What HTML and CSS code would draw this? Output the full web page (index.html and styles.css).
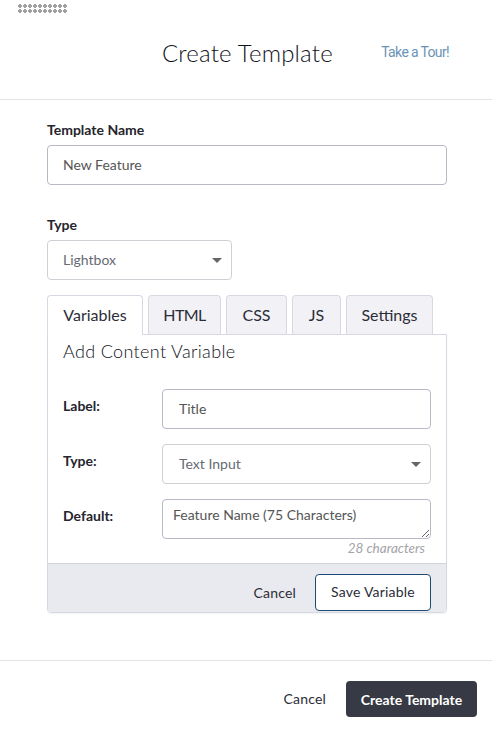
FILE: index.html
```html
<!DOCTYPE html>
<html lang="en">
<head>
<meta charset="utf-8">
<title>Create Template</title>
<link rel="stylesheet" href="styles.css">
</head>
<body>
<div class="grip"></div>
<header class="head">
  <h1 class="title">Create Template</h1>
  <a class="tour" href="#">Take a Tour!</a>
</header>
<main class="body">
  <label class="field-label" for="name">Template Name</label>
  <input class="control wide" id="name" value="New Feature">
  <label class="field-label type-label">Type</label>
  <div class="select narrow"><span>Lightbox</span><i class="caret"></i></div>
  <nav class="tabs">
    <a class="tab active">Variables</a>
    <a class="tab">HTML</a>
    <a class="tab">CSS</a>
    <a class="tab">JS</a>
    <a class="tab">Settings</a>
  </nav>
  <section class="panel">
    <div class="panel-body">
      <h2 class="panel-title">Add Content Variable</h2>
      <div class="row">
        <label class="row-label">Label:</label>
        <input class="control row-control indent" value="Title">
      </div>
      <div class="row">
        <label class="row-label">Type:</label>
        <div class="select row-control indent"><span>Text Input</span><i class="caret"></i></div>
      </div>
      <div class="row last">
        <label class="row-label">Default:</label>
        <textarea class="control row-control area">Feature Name (75 Characters)</textarea>
      </div>
      <div class="count">28 characters</div>
    </div>
    <div class="panel-foot">
      <a class="cancel">Cancel</a>
      <button class="save">Save Variable</button>
    </div>
  </section>
</main>
<footer class="foot">
  <a class="cancel">Cancel</a>
  <button class="create">Create Template</button>
</footer>
</body>
</html>
```
FILE: styles.css
```css
* { box-sizing: border-box; }
html, body { margin: 0; padding: 0; background: #fff; }
body { width: 492px; height: 733px; overflow: hidden; font-family: "Lato", "Liberation Sans", sans-serif; color: #2b2d38; position: relative; }
.grip { position: absolute; left: 18px; top: 4px; width: 49px; height: 10px; background-image: radial-gradient(circle at 2px 2px, #a0a0a0 1.6px, transparent 2px); background-size: 5px 5px; }
.head { height: 100px; border-bottom: 1px solid #e4e4e6; display: flex; align-items: center; position: relative; padding: 6px 43px 0 162px; justify-content: space-between; }
.title { margin: 0; font-size: 24px; font-weight: 300; color: #11131b; letter-spacing: 0.2px; }
.tour { font-family: "Roboto", sans-serif; font-size: 14px; color: #6a93b5; text-decoration: none; letter-spacing: -0.65px; margin-top: -1px; }
.body { padding: 21px 45px 0 47px; height: 560px; }
.field-label { display: block; font-size: 14px; font-weight: 700; line-height: 17px; color: #25252d; margin-bottom: 7px; }
.type-label { margin-top: 31px; margin-bottom: 7px; }
.control { display: block; background: #fff; border: 1px solid #b9b9c6; border-radius: 4px; font: 14px "Lato", sans-serif; color: #555; height: 40px; padding: 0 15px 2px; outline: none; }
.wide { width: 400px; }
.select { height: 40px; border: 1px solid #cfcfd6; border-radius: 4px; display: flex; align-items: center; justify-content: space-between; padding: 0 9px 2px 15px; font-size: 14px; color: #666a73; background: #fff; }
.narrow { width: 185px; }
.control.indent, .select.indent { padding-left: 16px; }
.caret { width: 0; height: 0; border-left: 5px solid transparent; border-right: 5px solid transparent; border-top: 5px solid #666; margin-top: 3px; }
.tabs { display: flex; gap: 5px; margin-top: 15px; height: 40px; position: relative; }
.tab { display: flex; align-items: center; justify-content: center; height: 39px; padding: 0 15px 2px; font-size: 16px; color: #2b2d38; background: #f2f2f6; border: 1px solid #d8d8e2; border-bottom: 0; border-radius: 4px 4px 0 0; }
.tab:nth-child(1) { width: 96px; }
.tab:nth-child(2) { width: 73px; letter-spacing: -0.6px; }
.tab:nth-child(3) { width: 61px; }
.tab:nth-child(4) { width: 49px; }
.tab:nth-child(5) { width: 87px; }
.tab.active { background: #fff; height: 40px; position: relative; z-index: 1; }
.panel { width: 400px; margin-top: -1px; border: 1px solid #d8d8e2; border-radius: 0 0 4px 4px; height: 279px; display: flex; flex-direction: column; box-shadow: 0 1px 2px rgba(0,0,0,0.05); }
.panel-body { flex: 1; padding: 6px 15px 0 15px; }
.panel-title { margin: 0 0 27px; font-size: 18px; font-weight: 300; line-height: 21px; color: #11131b; letter-spacing: 0.35px; }
.row { display: flex; margin-bottom: 15px; }
.row.last { margin-bottom: 0; }
.row-label { width: 99px; font-size: 14px; font-weight: 700; color: #25252d; line-height: 17px; padding-top: 8px; }
.row-control { width: 269px; flex: none; }
.control.area { padding: 5px 10px; line-height: 20px; resize: vertical; overflow: hidden; }
.count { text-align: right; font-size: 13.5px; font-style: italic; color: #a3a3a8; padding-right: 6px; line-height: 18px; }
.panel-foot { flex: none; height: 49px; background: #e9eaef; border-top: 1px solid #d2d2d8; display: flex; align-items: center; justify-content: flex-end; gap: 19px; padding: 10px 15px 1px 0; border-radius: 0 0 4px 4px; }
.cancel { font-size: 14px; color: #2b2d38; letter-spacing: 0.2px; }
.save { width: 116px; height: 37px; background: #fff; border: 1px solid #1f4a75; border-radius: 4px; font: 14px "Lato", sans-serif; color: #2b2d38; letter-spacing: 0.2px; padding: 0 0 2px; }
.foot { position: absolute; left: 0; right: 0; top: 660px; height: 73px; border-top: 1px solid #e4e4e6; display: flex; align-items: center; justify-content: flex-end; gap: 20px; padding: 0 15px 0 0; }
.foot .cancel { margin-top: 3px; }
.create { width: 131px; height: 36px; background: #373a44; border: 0; border-radius: 4px; font: 700 14px "Lato", sans-serif; color: #fff; padding: 0; margin-top: 4px; }
```
